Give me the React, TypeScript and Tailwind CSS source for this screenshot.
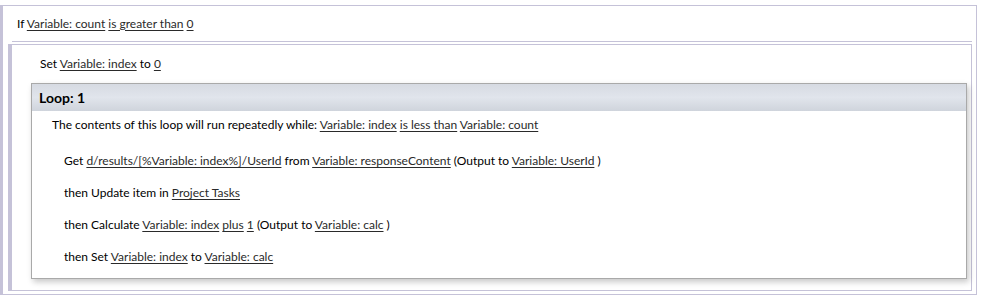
import type { ReactNode } from 'react';

const L = ({ children }: { children: ReactNode }) => (
  <span className="text-[#2a2a2a] underline decoration-1 underline-offset-[2px]">{children}</span>
);

const Row = ({ className, children }: { className: string; children: ReactNode }) => (
  <div className={`h-[16px] whitespace-nowrap leading-[16px] ${className}`}>{children}</div>
);

export default function App() {
  return (
    <div className="h-[298px] w-[981px] bg-white pt-[5px] text-[12px] text-black [font-family:Lato,'Open_Sans',sans-serif]">
      <div className="flex h-[290px] w-[977px] flex-col border-b border-l-[3px] border-r border-t border-[#c5c2d8]">
        <div className="flex h-[35px] shrink-0 items-center pl-[14px]">
          <span>
            If <L>Variable: count</L> <L>is greater than</L> <L>0</L>
          </span>
        </div>
        <div className="ml-[9px] mr-[4px] h-px shrink-0 bg-[#c5c2d8]" />
        <div className="mb-[3px] ml-[5px] mr-[4px] mt-[2px] flex flex-1 flex-col border-b border-l-4 border-r border-t border-[#c5c2d8]">
          <Row className="mt-[11px] pl-[28px]">
            Set <L>Variable: index</L> to <L>0</L>
          </Row>
          <div className="ml-[19px] mr-[4px] mt-[11px] flex h-[196px] flex-col border border-[#a9a9a9] bg-white shadow-[2px_3px_6px_rgba(0,0,0,0.22)]">
            <div className="flex h-[27px] shrink-0 items-center bg-gradient-to-b from-[#d6dae2] via-[#e1e5ec] to-[#cfd4dc] pl-[7px] text-[14px] font-bold text-black">
              Loop: 1
            </div>
            <div className="flex flex-col pl-[20px] pt-[6px]">
              <Row className="">
                The contents of this loop will run repeatedly while: <L>Variable: index</L> <L>is less than</L>{' '}
                <L>Variable: count</L>
              </Row>
              <div className="flex flex-col gap-[16px] pl-[12px] pt-[20px]">
                <Row className="">
                  Get <L>d/results/[%Variable: index%]/UserId</L> from <L>Variable: responseContent</L> (Output to{' '}
                  <L>Variable: UserId</L> )
                </Row>
                <Row className="">
                  then Update item in <L>Project Tasks</L>
                </Row>
                <Row className="">
                  then Calculate <L>Variable: index</L> <L>plus</L> <L>1</L> (Output to <L>Variable: calc</L> )
                </Row>
                <Row className="">
                  then Set <L>Variable: index</L> to <L>Variable: calc</L>
                </Row>
              </div>
            </div>
          </div>
        </div>
      </div>
    </div>
  );
}
